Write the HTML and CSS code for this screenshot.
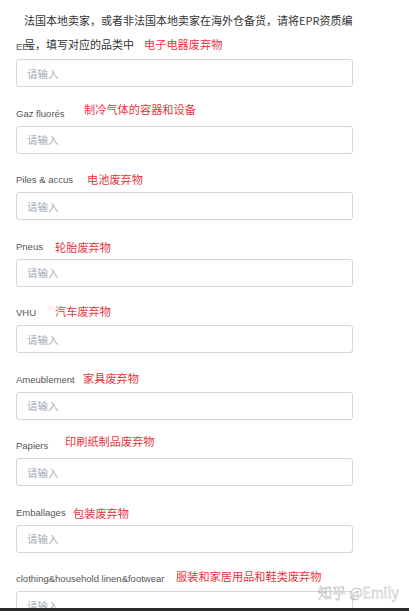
FILE: index.html
```html
<!DOCTYPE html>
<html lang="zh">
<head>
<meta charset="utf-8">
<title>EPR</title>
<link rel="stylesheet" href="styles.css">
</head>
<body>
<div class="screen">
  <div class="content">
    <p class="intro">法国本地卖家，或者非法国本地卖家在海外仓备货，请将EPR资质编号，填写对应的品类中<span class="note-inline">电子电器废弃物</span></p>
    <div class="form">
      <div class="field">
        <div class="label">EEE</div>
        <input class="input" placeholder="请输入">
      </div>
      <div class="field">
        <div class="label">Gaz fluorés</div>
        <span class="note n-gaz">制冷气体的容器和设备</span>
        <input class="input" placeholder="请输入">
      </div>
      <div class="field">
        <div class="label">Piles &amp; accus</div>
        <span class="note n-piles">电池废弃物</span>
        <input class="input" placeholder="请输入">
      </div>
      <div class="field">
        <div class="label">Pneus</div>
        <span class="note n-pneus">轮胎废弃物</span>
        <input class="input" placeholder="请输入">
      </div>
      <div class="field">
        <div class="label">VHU</div>
        <span class="note n-vhu">汽车废弃物</span>
        <input class="input" placeholder="请输入">
      </div>
      <div class="field">
        <div class="label">Ameublement</div>
        <span class="note n-meuble">家具废弃物</span>
        <input class="input" placeholder="请输入">
      </div>
      <div class="field">
        <div class="label">Papiers</div>
        <span class="note n-papier">印刷纸制品废弃物</span>
        <input class="input" placeholder="请输入">
      </div>
      <div class="field">
        <div class="label">Emballages</div>
        <span class="note n-emb">包装废弃物</span>
        <input class="input" placeholder="请输入">
      </div>
      <div class="field">
        <div class="label">clothing&amp;household linen&amp;footwear</div>
        <span class="note n-cloth">服装和家居用品和鞋类废弃物</span>
        <input class="input" placeholder="请输入">
      </div>
    </div>
    <div class="watermark">知乎 @Emily</div>
  </div>
  <div class="bar"></div>
</div>
</body>
</html>
```
FILE: styles.css
```css
html, body {
  margin: 0;
  padding: 0;
  background: #fff;
  overflow: hidden;
}
.screen {
  height: 611px;
  display: flex;
  flex-direction: column;
}
.content {
  flex: 1;
  overflow: hidden;
  position: relative;
}
.intro {
  margin: 0 0 -15px 0;
  padding: 8px 50px 0 24px;
  font-family: "Noto Sans CJK SC", "Noto Sans", sans-serif;
  font-size: 11px;
  line-height: 24px;
  color: #333;
  position: relative;
  z-index: 1;
}
.note-inline {
  margin-left: 10px;
  font-size: 11.2px;
  color: #e5353c;
}
.form {
  padding: 0 56px 0 16px;
}
.field {
  position: relative;
  margin-bottom: 20.5px;
}
.label {
  font-family: "Liberation Sans", Arial, sans-serif;
  font-size: 9.5px;
  line-height: 12px;
  height: 12px;
  color: #555;
  margin-bottom: 6px;
  white-space: nowrap;
}
.note {
  position: absolute;
  font-family: "Noto Sans CJK SC", "Noto Sans", sans-serif;
  font-size: 11.2px;
  line-height: 12px;
  color: #e5353c;
  white-space: nowrap;
}
.n-gaz { left: 68px; top: -5px; }
.n-piles { left: 71px; top: -1px; }
.n-pneus { left: 39px; top: 0; }
.n-vhu { left: 39px; top: -2px; }
.n-meuble { left: 67px; top: -2px; }
.n-papier { left: 49px; top: -5px; }
.n-emb { left: 57px; top: 0; }
.n-cloth { left: 160px; top: -3px; }
.input {
  display: block;
  width: 100%;
  height: 28px;
  box-sizing: border-box;
  margin: 0;
  border: 1px solid #d3d6db;
  border-radius: 3px;
  padding: 0 10px;
  font-family: "Noto Sans CJK SC", "Noto Sans", sans-serif;
  font-size: 10.5px;
  color: #333;
  background: #fff;
  outline: none;
}
.input::placeholder {
  color: #a3aab5;
}
.watermark {
  position: absolute;
  left: 318px;
  top: 583px;
  font-family: "Noto Sans CJK SC", "Noto Sans", sans-serif;
  font-size: 14px;
  line-height: 18px;
  color: rgba(255, 255, 255, 0.9);
  -webkit-text-stroke: 0.4px #a8a8a8;
  white-space: nowrap;
}
.bar {
  height: 3px;
  background: #2a2a2a;
}
```
